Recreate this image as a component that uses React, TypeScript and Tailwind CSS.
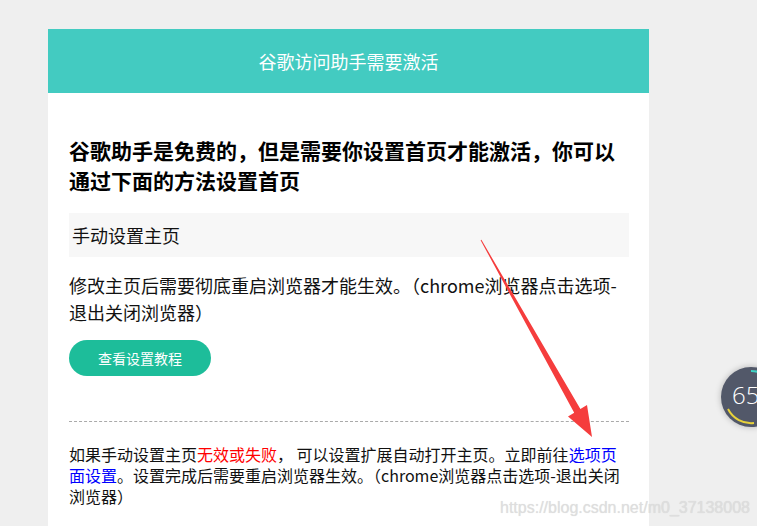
import React from "react";

const cjk = { fontFamily: '"Noto Sans CJK SC", "Noto Sans", sans-serif' };

export default function App() {
  return (
    <div className="relative h-[526px] w-[757px] overflow-hidden bg-[#efefef]" style={cjk}>
      <div className="ml-[48px] mt-[29px] w-[601px] bg-white h-[497px]">
        <div className="flex h-[64px] items-center justify-center bg-[#43cbc1] text-[18px] text-white">
          谷歌访问助手需要激活
        </div>
        <div className="px-[21px] pr-[20px] pt-[42px]">
          <h1 className="text-[21px] font-bold leading-[30px] text-black">
            谷歌助手是免费的，但是需要你设置首页才能激活，你可以通过下面的方法设置首页
          </h1>
          <div className="mt-[18px] flex h-[44px] items-center bg-[#f7f7f7] pl-[3px] text-[18px] text-[#111]">
            手动设置主页
          </div>
          <p className="mt-[15px] text-[18px] leading-[27px] text-[#111]">
            修改主页后需要彻底重启浏览器才能生效。（chrome浏览器点击选项-退出关闭浏览器）
          </p>
          <button className="mt-[14px] flex h-[36px] w-[142px] items-center justify-center rounded-full bg-[#1dbd9a] text-[14px] text-white">
            查看设置教程
          </button>
          <div className="mt-[45px] border-t border-dashed border-[#aaaaaa]" />
          <p className="mt-[22px] text-[16px] leading-[21px] text-[#111]">
            如果手动设置主页<span className="text-[#ff0000]">无效或失败</span>， 可以设置扩展自动打开主页。立即前往<span className="text-[#0000ff]">选项页面设置</span>。设置完成后需要重启浏览器生效。（chrome浏览器点击选项-退出关闭浏览器）
          </p>
        </div>
      </div>

      {/* red arrow annotation */}
      <svg className="absolute left-0 top-0" width="757" height="526" viewBox="0 0 757 526">
        <polygon
          points="480.6,240.2 481.4,239.8 580.4,409.1 587,405 592,437 568,416.5 574.2,412.7"
          fill="#f53d3d"
        />
      </svg>

      {/* floating score widget */}
      <div className="absolute left-[721px] top-[367px] h-[60px] w-[60px] rounded-full bg-[#525869] shadow-[0_0_6px_rgba(0,0,0,0.25)]">
        <svg className="absolute left-0 top-0" width="60" height="60" viewBox="0 0 60 60">
          <path d="M30 4 A26 26 0 0 1 44 8" fill="none" stroke="#3fd3c4" strokeWidth="2" />
          <path d="M7 42 A26 26 0 0 0 33 56" fill="none" stroke="#e8d23a" strokeWidth="2" />
        </svg>
        <span
          className="absolute left-[11px] top-[13px] text-[24px] leading-[30px] font-light text-white"
          style={{ fontFamily: '"Open Sans", sans-serif' }}
        >
          65
        </span>
      </div>

      {/* watermark */}
      <div
        className="absolute left-[500px] top-[498px] text-[16px] leading-[20px] text-[#dedede]"
        style={{ fontFamily: '"Liberation Sans", Arial, sans-serif', textShadow: "0 0 1px rgba(0,0,0,0.12)" }}
      >
        https://blog.csdn.net/m0_37138008
      </div>
    </div>
  );
}
